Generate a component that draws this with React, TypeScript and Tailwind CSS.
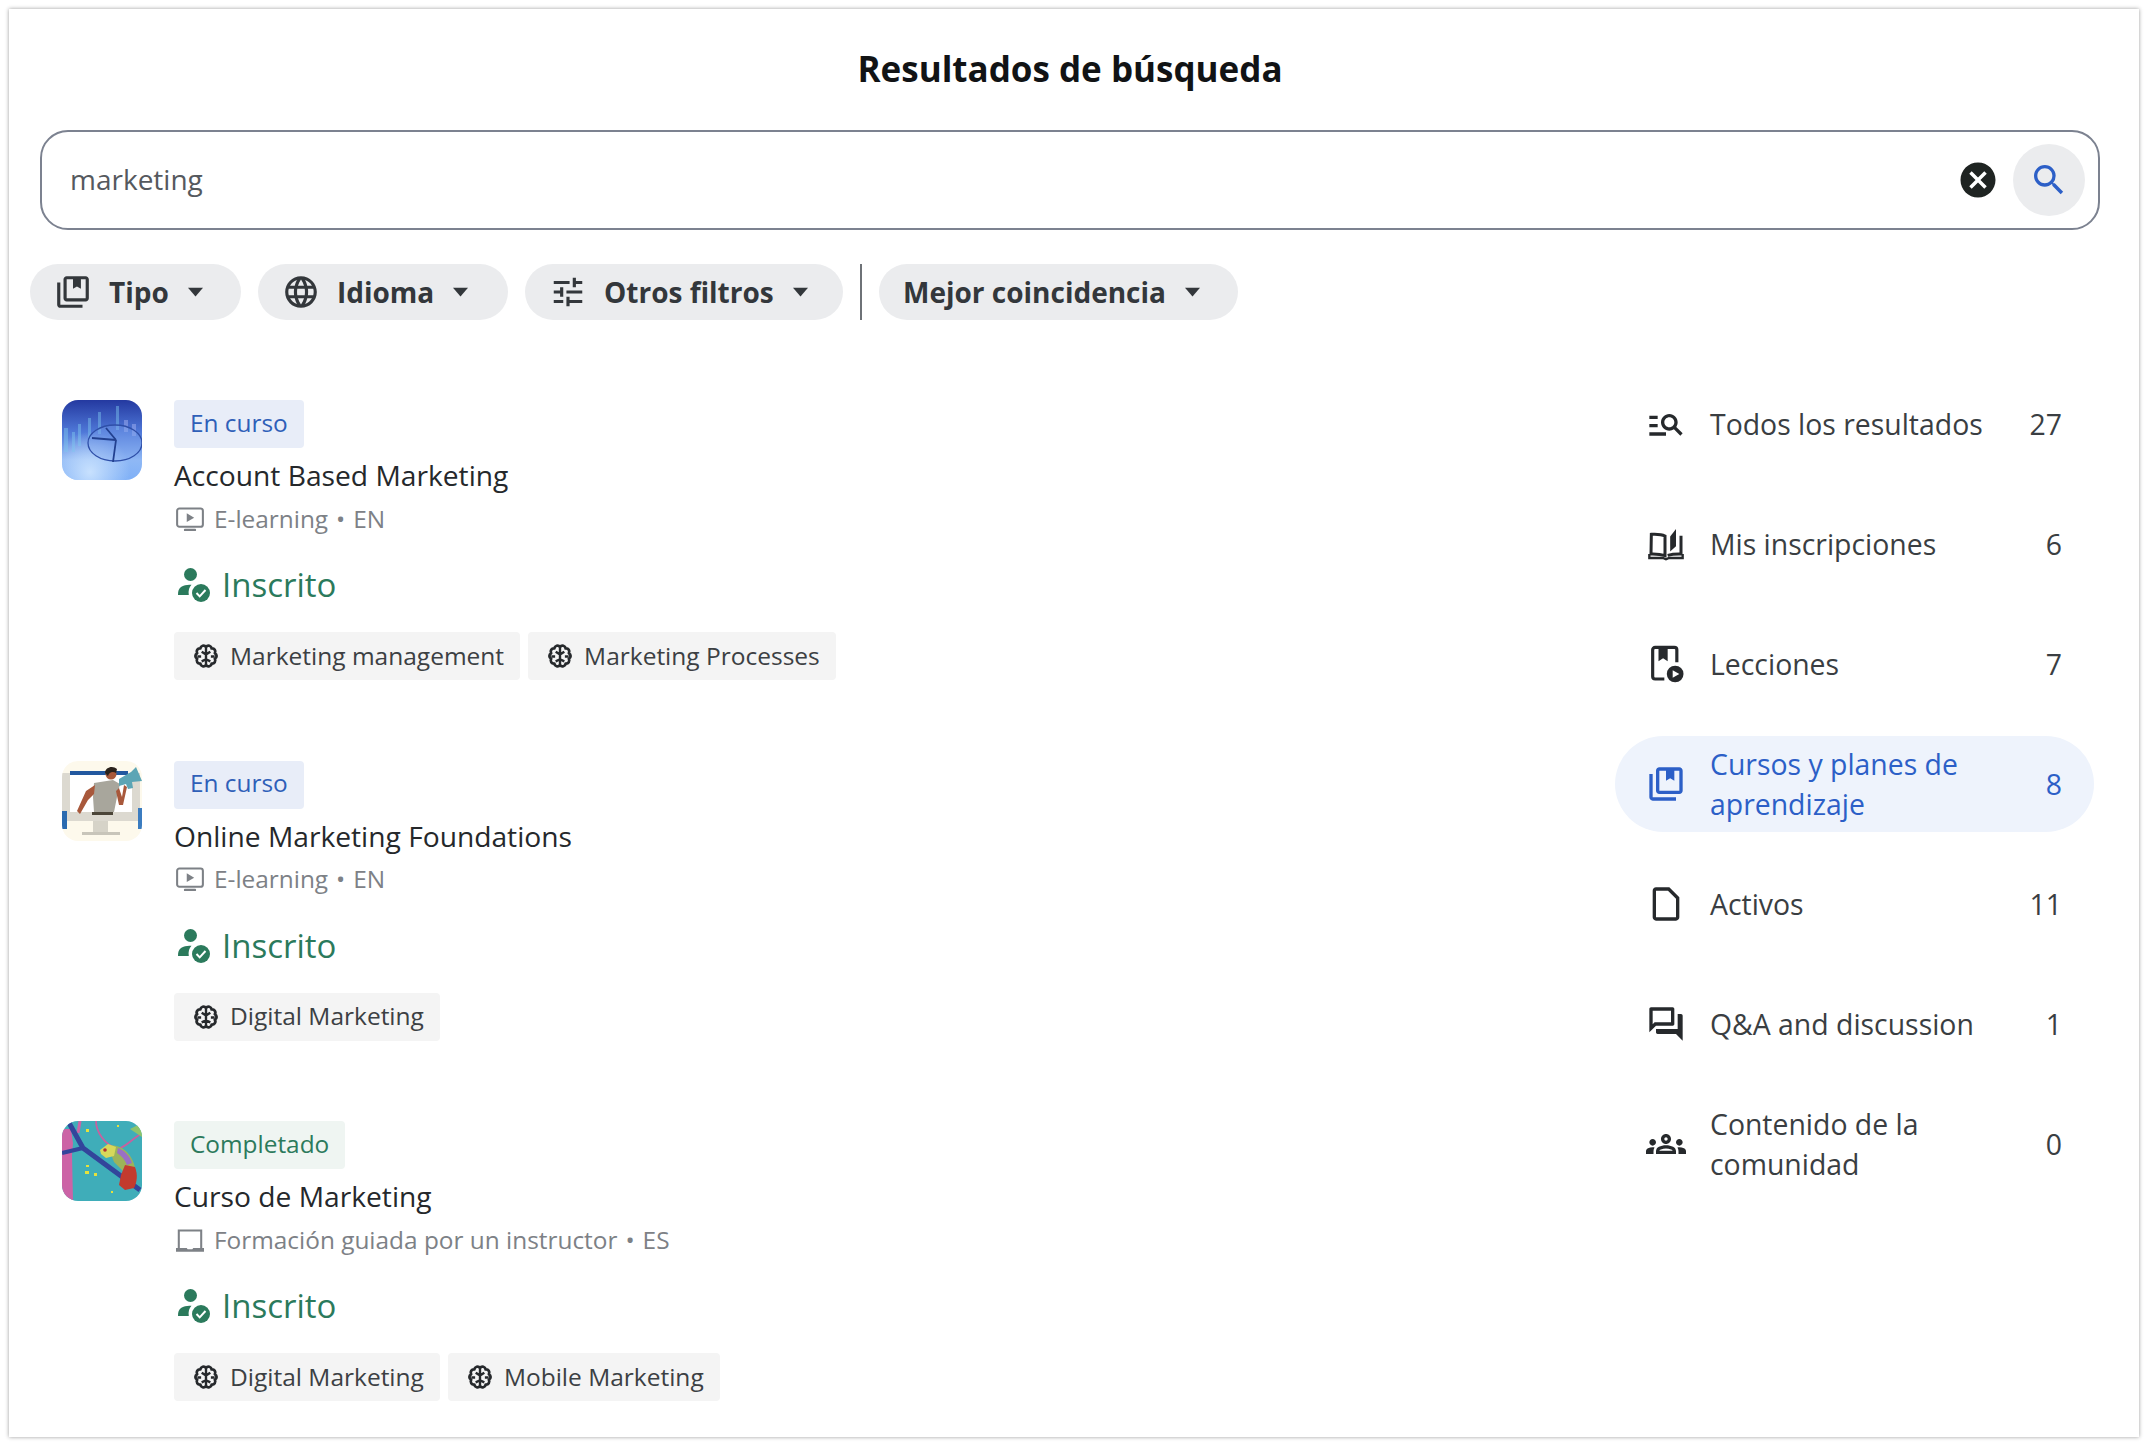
import React from "react";

interface IconProps {
  d: string;
  className?: string;
  box?: string;
}

const Icon: React.FC<IconProps> = ({ d, className, box = "0 0 24 24" }) => (
  <svg viewBox={box} fill="currentColor" className={className}>
    <path fillRule="evenodd" d={d} />
  </svg>
);

// Material paths
const SEARCH =
  "M15.5 14h-.79l-.28-.27A6.471 6.471 0 0 0 16 9.5 6.5 6.5 0 1 0 9.5 16c1.61 0 3.09-.59 4.23-1.57l.27.28v.79l5 4.99L20.49 19l-4.99-5zm-6 0C7.01 14 5 11.99 5 9.5S7.01 5 9.5 5 14 7.01 14 9.5 11.99 14 9.5 14z";
const CANCEL =
  "M12 2C6.47 2 2 6.47 2 12s4.47 10 10 10 10-4.47 10-10S17.53 2 12 2zm5 13.59L15.59 17 12 13.41 8.41 17 7 15.59 10.59 12 7 8.41 8.41 7 12 10.59 15.59 7 17 8.41 13.41 12 17 15.59z";
const TUNE =
  "M3 17v2h6v-2H3zM3 5v2h10V5H3zm10 16v-2h8v-2h-8v-2h-2v6h2zM7 9v2H3v2h4v2h2V9H7zm14 4v-2H11v2h10zm-6-4h2V7h4V5h-4V3h-2v6z";
const GLOBE =
  "M11.99 2C6.47 2 2 6.48 2 12s4.47 10 9.99 10C17.52 22 22 17.52 22 12S17.52 2 11.99 2zm6.93 6h-2.95c-.32-1.25-.78-2.45-1.38-3.56 1.84.63 3.37 1.91 4.33 3.56zM12 4.04c.83 1.2 1.48 2.53 1.91 3.96h-3.82c.43-1.43 1.08-2.76 1.91-3.96zM4.26 14C4.1 13.36 4 12.69 4 12s.1-1.36.26-2h3.38c-.08.66-.14 1.32-.14 2 0 .68.06 1.34.14 2H4.26zm.82 2h2.95c.32 1.25.78 2.45 1.38 3.56-1.84-.63-3.37-1.9-4.33-3.56zm2.95-8H5.08c.96-1.66 2.49-2.93 4.33-3.56C8.81 5.55 8.35 6.75 8.03 8zM12 19.96c-.83-1.2-1.48-2.53-1.91-3.96h3.82c-.43 1.43-1.08 2.76-1.91 3.96zM14.34 14H9.66c-.09-.66-.16-1.32-.16-2 0-.68.07-1.35.16-2h4.68c.09.65.16 1.32.16 2 0 .68-.07 1.34-.16 2zm.25 5.56c.6-1.11 1.06-2.31 1.38-3.56h2.95c-.96 1.65-2.49 2.93-4.33 3.56zM16.36 14c.08-.66.14-1.32.14-2 0-.68-.06-1.34-.14-2h3.38c.16.64.26 1.31.26 2s-.1 1.36-.26 2h-3.38z";
const LIBRARY =
  "M20 2H8c-1.1 0-2 .9-2 2v12c0 1.1.9 2 2 2h12c1.1 0 2-.9 2-2V4c0-1.1-.9-2-2-2zm0 14H8V4h4v6l2.5-1.5L17 10V4h3v12zM4 6H2v14c0 1.1.9 2 2 2h14v-2H4V6z";
const MANAGE_SEARCH =
  "M7 9H2V7h5v2zm0 3H2v2h5v-2zm13.59 7-3.83-3.83c-.8.52-1.74.83-2.76.83-2.76 0-5-2.24-5-5s2.24-5 5-5 5 2.24 5 5c0 1.02-.31 1.96-.83 2.75L22 17.59 20.59 19zM17 11c0-1.65-1.35-3-3-3s-3 1.35-3 3 1.35 3 3 3 3-1.35 3-3zM2 19h10v-2H2v2z";
const FILE =
  "M14 2H6c-1.1 0-1.99.9-1.99 2L4 20c0 1.1.89 2 1.99 2H18c1.1 0 2-.9 2-2V8l-6-6zM6 20V4h7.17L18 8.83V20H6z";
const QUESTION_ANSWER =
  "M15 4v7H5.17L4 12.17V4h11m1-2H3c-.55 0-1 .45-1 1v14l4-4h10c.55 0 1-.45 1-1V3c0-.55-.45-1-1-1zm5 4h-2v9H6v2c0 .55.45 1 1 1h11l4 4V7c0-.55-.45-1-1-1z";
const GROUPS =
  "M4 13c1.1 0 2-.9 2-2s-.9-2-2-2-2 .9-2 2 .9 2 2 2zm1.13 1.1c-.37-.06-.74-.1-1.13-.1-.99 0-1.93.21-2.78.58C.48 14.9 0 15.62 0 16.43V18h4.5v-1.61c0-.83.23-1.61.63-2.29zM20 13c1.1 0 2-.9 2-2s-.9-2-2-2-2 .9-2 2 .9 2 2 2zm4 3.43c0-.81-.48-1.53-1.22-1.85-.85-.37-1.79-.58-2.78-.58-.39 0-.76.04-1.13.1.4.68.63 1.46.63 2.29V18H24v-1.57zm-7.76-2.78C15.07 13.13 13.63 12.75 12 12.75s-3.07.39-4.24.9C6.68 14.13 6 15.21 6 16.39V18h12v-1.61c0-1.18-.68-2.26-1.76-2.74zM8.07 16c.09-.23.13-.39.91-.69.97-.38 1.99-.56 3.02-.56s2.05.18 3.02.56c.77.3.81.46.91.69H8.07zM12 8c.55 0 1 .45 1 1s-.45 1-1 1-1-.45-1-1 .45-1 1-1m0-2c-1.66 0-3 1.34-3 3s1.34 3 3 3 3-1.34 3-3-1.34-3-3-3z";

const BookOpen = ({ className }: { className?: string }) => (
  <svg viewBox="0 0 24 24" className={className}>
    <path d="M11.4 19V7.200C9.600 6.300 7 6 3.200 6.200L3 18c3.600-.1 6.400.3 8.400 1z" fill="none" stroke="currentColor" strokeWidth="1.800" />
    <path d="M13 18.800c1.800-.5 4.400-.9 8-.8V7" fill="none" stroke="currentColor" strokeWidth="1.800" />
    <path d="M2 18v2.400h8.200l1.800.8 1.800-.8H22V18" fill="none" stroke="currentColor" strokeWidth="1.400" />
    <path d="M14.500 16.500V7.500L18 3v10.300z" fill="currentColor" />
  </svg>
);

const LessonIcon = ({ className }: { className?: string }) => (
  <svg viewBox="0 0 24 24" className={className}>
    <path
      d="M11 21H5.500A1.500 1.500 0 0 1 4 19.500V3.500A1.500 1.500 0 0 1 5.500 2h11.500A1.500 1.500 0 0 1 18.500 3.500V11"
      fill="none"
      stroke="currentColor"
      strokeWidth="1.900"
    />
    <path d="M7.500 2.500h5.500v7.800l-2.750-1.800-2.750 1.800z" fill="currentColor" />
    <circle cx="17.500" cy="18" r="5" fill="currentColor" />
    <path d="M16 15.700l4 2.300-4 2.300z" fill="#ffffff" />
  </svg>
);

const BrainIcon = ({ className }: { className?: string }) => (
  <svg viewBox="0 0 24 24" className={className} fill="none" stroke="currentColor" strokeWidth="2.600" strokeLinejoin="round">
    <path d="M12 3.500A2.950 2.950 0 0 0 6.800 5 2.950 2.950 0 0 0 3.800 9.400 2.950 2.950 0 0 0 3.800 14.600 2.950 2.950 0 0 0 6.800 19 2.950 2.950 0 0 0 12 20.500 2.950 2.950 0 0 0 17.200 19 2.950 2.950 0 0 0 20.200 14.600 2.950 2.950 0 0 0 20.200 9.400 2.950 2.950 0 0 0 17.200 5 2.950 2.950 0 0 0 12 3.500Z" />
    <path d="M12 3.500v17M12 10.500L8 8M12 15L8 17M12 10.500L16 8M12 15l4 2M4 12.500h3.500M20 12.500h-3.500" strokeWidth="2.200" />
  </svg>
);

const EnrolledIcon = ({ className }: { className?: string }) => (
  <svg viewBox="0 0 34 36" className={className} fill="currentColor">
    <circle cx="14.500" cy="7.500" r="6.500" />
    <path d="M2 28c0-4 .6-6 3-8 3-2 7-2.600 10.500-2.200-2.200 2.200-3.500 6-2.700 10.200z" />
    <circle cx="25" cy="26" r="9" />
    <path d="M20.500 26l3.200 3.400 5.800-6.400" fill="none" stroke="#ffffff" strokeWidth="2" />
  </svg>
);

const ScreenPlayIcon = ({ className }: { className?: string }) => (
  <svg viewBox="0 0 30 26" className={className}>
    <rect x="1.200" y="1.200" width="27.600" height="19.600" rx="2.500" fill="none" stroke="currentColor" strokeWidth="2.200" />
    <path d="M11.500 6.300l8 4.700-8 4.700z" fill="currentColor" />
    <rect x="8.500" y="22.800" width="13" height="2.600" rx="1" fill="currentColor" />
  </svg>
);

const LaptopIcon = ({ className }: { className?: string }) => (
  <svg viewBox="0 0 30 26" className={className}>
    <path d="M3 21V2.200h24V21" fill="none" stroke="currentColor" strokeWidth="2.200" />
    <path d="M0 21h11.500l1 1.300h5l1-1.300H30v4H0z" fill="currentColor" />
  </svg>
);

const Caret = ({ className }: { className?: string }) => (
  <svg viewBox="0 0 12 8" className={className} fill="currentColor">
    <path d="M0 .5h12L6 7.500z" />
  </svg>
);

const ThumbBlue = () => (
  <svg viewBox="0 0 80 80" className="w-full h-full">
    <defs>
      <linearGradient id="blueBg" x1="0" y1="0" x2="0" y2="1">
        <stop offset="0" stopColor="#2439a0" />
        <stop offset="0.4" stopColor="#4f78d8" />
        <stop offset="0.75" stopColor="#8fb8f5" />
        <stop offset="1" stopColor="#7fb0f7" />
      </linearGradient>
      <radialGradient id="blueGlow" cx="0.35" cy="0.9" r="0.5">
        <stop offset="0" stopColor="#cfe6ff" stopOpacity="0.9" />
        <stop offset="1" stopColor="#cfe6ff" stopOpacity="0" />
      </radialGradient>
      <filter id="blurA">
        <feGaussianBlur stdDeviation="0.7" />
      </filter>
    </defs>
    <rect width="80" height="80" fill="url(#blueBg)" />
    <rect width="80" height="80" fill="url(#blueGlow)" />
    <g filter="url(#blurA)">
      <path d="M2 28h4v24H2zM10 32h3v20h-3zM16 24h3v22h-3zM26 18h3v20h-3zM36 12h3v22h-3zM54 6h3v24h-3z" fill="#7fc8ee" opacity="0.45" />
      <path d="M62 20h4v12h-4zM70 24h4v12h-4z" fill="#9fb0f0" opacity="0.5" />
      <ellipse cx="53" cy="43" rx="27" ry="18" fill="#7fa6ee" fillOpacity="0.35" stroke="#2f4fa8" strokeWidth="1.300" />
      <path d="M54 40L51 62M54 40L30 38M54 40L44 28" stroke="#22408f" strokeWidth="1.800" fill="none" />
    </g>
  </svg>
);

const ThumbMan = () => (
  <svg viewBox="0 0 80 80" className="w-full h-full">
    <defs>
      <filter id="blurB">
        <feGaussianBlur stdDeviation="0.3" />
      </filter>
    </defs>
    <rect width="80" height="80" fill="#fdf9ec" />
    <g filter="url(#blurB)">
      <rect x="0" y="12" width="78" height="48" fill="#dcd9d0" />
      <rect x="8" y="13" width="62" height="38" fill="#ffffff" />
      <rect x="8" y="10" width="58" height="4" fill="#23589f" />
      <rect x="31" y="60" width="15" height="11" fill="#d6d3c8" />
      <rect x="20" y="71" width="38" height="3" fill="#c8c5ba" />
      <rect x="0" y="50" width="5" height="18" fill="#2a6ab0" />
      <rect x="76" y="47" width="4" height="21" fill="#3b7cc0" />
      <path d="M32 22l19-3 7 4-3 13-3 15H32l-1-15z" fill="#a8a69c" />
      <rect x="30" y="51" width="21" height="3" fill="#4b4439" />
      <path d="M33 24L24 30 15 50l3 3 8-14 6-6z" fill="#a8583a" />
      <path d="M54 30l3 14 4 0 4-18-3-2-2 12-3-9z" fill="#a8583a" />
      <circle cx="49" cy="13" r="5.500" fill="#a8583a" />
      <path d="M43 12c0-6 8-8 12-4l-1 4c-3-2-7-1-8 3z" fill="#2a211c" />
      <path d="M57 18l12-7 5-5 6 14-10 1 1 6-5 1-2-5-7 2z" fill="#5ca5b5" />
    </g>
  </svg>
);

const ThumbChameleon = () => (
  <svg viewBox="0 0 80 80" className="w-full h-full">
    <defs>
      <filter id="blurC">
        <feGaussianBlur stdDeviation="0.3" />
      </filter>
    </defs>
    <rect width="80" height="80" fill="#3fadb9" />
    <g filter="url(#blurC)">
      <path d="M0 8h9l2 14-1 12 1 46H0z" fill="#cc64a6" />
      <path d="M18 0l-2 12" stroke="#cc64a6" strokeWidth="3" />
      <path d="M6 0l15 27 57 42" fill="none" stroke="#33449b" strokeWidth="5" />
      <path d="M0 32l21-5" fill="none" stroke="#33449b" strokeWidth="4" />
      <path d="M34 0c0 10 8 24 22 28 8-2 14-10 24-16" fill="none" stroke="#c8609f" strokeWidth="1.800" />
      <path d="M68 8l12-6v14l-6-4z" fill="#8fc46a" />
      <path d="M46 25c12-3 24 7 27 22l-9 6-12-12z" fill="#9cb35a" />
      <path d="M56 27c6 2 12 8 14 15l-5 2c-2-5-5-9-10-12z" fill="#9a6fc6" />
      <path d="M63 44l10 2c3 8 2 15-1 21l-9 2-6-5 2-10z" fill="#c23a2f" />
      <path d="M38 29l8-6 8 3-2 9-8 2-5-4z" fill="#d6d85a" />
      <circle cx="43" cy="29" r="1.800" fill="#b03030" />
      <g fill="#e6e23a">
        <rect x="23" y="50" width="4" height="3" />
        <rect x="32" y="52" width="3" height="3" />
        <rect x="24" y="44" width="3" height="2" />
        <rect x="55" y="4" width="2" height="2" />
        <rect x="24" y="8" width="3" height="3" />
        <rect x="49" y="70" width="2" height="2" />
      </g>
    </g>
  </svg>
);

const FILTERS = [
  { label: "Tipo", icon: LIBRARY, w: "w-[211px]" },
  { label: "Idioma", icon: GLOBE, w: "w-[250px]" },
  { label: "Otros filtros", icon: TUNE, w: "w-[318px]" },
];

const Pill = ({ label, icon, w }: { label: string; icon?: string; w: string }) => (
  <button className={`${w} h-[56px] rounded-full bg-[#ebecee] flex items-center pl-[24px] text-[#33373b] text-[28px] font-bold`}>
    {icon && <Icon d={icon} className="w-[38px] h-[38px] mr-[17px] shrink-0" />}
    <span className="whitespace-nowrap">{label}</span>
    <Caret className="w-[17px] h-[10px] ml-[18px] shrink-0" />
  </button>
);

interface Course {
  title: string;
  status: string;
  done?: boolean;
  kind: string;
  lang: string;
  live?: boolean;
  tags: string[];
  thumb: React.ReactNode;
}

const COURSES: Course[] = [
  {
    title: "Account Based Marketing",
    status: "En curso",
    kind: "E-learning",
    lang: "EN",
    tags: ["Marketing management", "Marketing Processes"],
    thumb: <ThumbBlue />,
  },
  {
    title: "Online Marketing Foundations",
    status: "En curso",
    kind: "E-learning",
    lang: "EN",
    tags: ["Digital Marketing"],
    thumb: <ThumbMan />,
  },
  {
    title: "Curso de Marketing",
    status: "Completado",
    done: true,
    kind: "Formación guiada por un instructor",
    lang: "ES",
    live: true,
    tags: ["Digital Marketing", "Mobile Marketing"],
    thumb: <ThumbChameleon />,
  },
];

const CourseRow = ({ course }: { course: Course }) => (
  <div className="flex gap-[32px]">
    <div className="w-[80px] h-[80px] rounded-[16px] overflow-hidden shrink-0">{course.thumb}</div>
    <div className="flex flex-col items-start">
      <span
        className={`h-[48px] px-[16px] pb-[2px] rounded-[4px] flex items-center text-[24.400px] ${
          course.done ? "bg-[#eff5f2] text-[#2c7a5c]" : "bg-[#e8edf8] text-[#2f5fb8]"
        }`}
      >
        {course.status}
      </span>
      <div className="mt-[7px] h-[40px] leading-[40px] text-[28.200px] text-[#25282b]">{course.title}</div>
      <div className="mt-[6px] h-[36px] flex items-center text-[24.400px] text-[#7d8186]">
        {course.live ? (
          <LaptopIcon className="w-[28px] h-[25px] ml-[2px] mr-[10px]" />
        ) : (
          <ScreenPlayIcon className="w-[28px] h-[25px] ml-[2px] mr-[10px]" />
        )}
        {course.kind}
        <span className="mx-[8px]">•</span>
        {course.lang}
      </div>
      <div className="mt-[26px] h-[44px] flex items-center text-[33px] text-[#2b7a5c]">
        <EnrolledIcon className="w-[34px] h-[36px] ml-[2px] mr-[12px]" />
        Inscrito
      </div>
      <div className="mt-[25px] flex gap-[8px]">
        {course.tags.map((tag) => (
          <span key={tag} className="h-[48px] pl-[19px] pr-[16px] rounded-[4px] bg-[#f4f4f4] flex items-center text-[24.500px] text-[#3c4043]">
            <BrainIcon className="w-[26px] h-[26px] mr-[11px] text-[#26292c]" />
            {tag}
          </span>
        ))}
      </div>
    </div>
  </div>
);

const Svg = (d: string, box?: string) => (cls: string) => <Icon d={d} box={box} className={cls} />;

const SIDE = [
  { label: "Todos los resultados", count: 27, icon: Svg(MANAGE_SEARCH) },
  { label: "Mis inscripciones", count: 6, icon: (cls: string) => <BookOpen className={cls} /> },
  { label: "Lecciones", count: 7, icon: (cls: string) => <LessonIcon className={cls} /> },
  { label: "Cursos y planes de aprendizaje", count: 8, icon: Svg(LIBRARY), active: true },
  { label: "Activos", count: 11, icon: Svg(FILE) },
  { label: "Q&A and discussion", count: 1, icon: Svg(QUESTION_ANSWER) },
  { label: "Contenido de la comunidad", count: 0, icon: Svg(GROUPS) },
];

export default function App() {
  return (
    <div className="bg-white p-[9px] font-['Open_Sans',sans-serif]">
      <div className="h-[1428px] bg-white shadow-[0_0_4px_rgba(0,0,0,0.4)] px-[21px] overflow-hidden">
        <h1 className="pt-[38px] text-center text-[35px] leading-[44px] font-bold text-[#111315] pr-[8px]">
          Resultados de búsqueda
        </h1>

        <div className="mt-[39px] ml-[10px] mr-[18px] h-[100px] rounded-[28px] border-2 border-[#7c8290] flex items-center pl-[28px] pr-[13px]">
          <span className="flex-1 text-[28px] text-[#55595e] pb-[2px]">marketing</span>
          <Icon d={CANCEL} className="w-[42px] h-[42px] text-[#1f2422] mr-[14px]" />
          <span className="w-[72px] h-[72px] rounded-full bg-[#ebecee] flex items-center justify-center">
            <Icon d={SEARCH} className="w-[40px] h-[40px] text-[#2c5fc7]" />
          </span>
        </div>

        <div className="mt-[34px] flex items-center gap-[17px]">
          {FILTERS.map((f) => (
            <Pill key={f.label} {...f} />
          ))}
          <div className="w-[2px] h-[56px] bg-[#6e7277]" />
          <Pill label="Mejor coincidencia" w="w-[359px]" />
        </div>

        <div className="flex items-start justify-between">
          <div className="mt-[80px] ml-[32px] flex flex-col gap-[80.500px]">
            {COURSES.map((c) => (
              <CourseRow key={c.title} course={c} />
            ))}
          </div>

          <div className="mt-[56px] mr-[24px] w-[479px] flex flex-col gap-[24px]">
            {SIDE.map((s) => (
              <div
                key={s.label}
                className={`h-[96px] rounded-[48px] pl-[34px] pr-[32px] flex items-center text-[28.400px] leading-[40px] ${
                  s.active ? "bg-[#eef3fc] text-[#2c5fc7]" : "text-[#3a3e42]"
                }`}
              >
                {s.icon(`w-[40px] h-[40px] shrink-0 -ml-[3px] ${s.active ? "text-[#2c5fc7]" : "text-[#26292c]"}`)}
                <span className="ml-[24px] w-[285px]">{s.label}</span>
                <span className="ml-auto">{s.count}</span>
              </div>
            ))}
          </div>
        </div>
      </div>
    </div>
  );
}
